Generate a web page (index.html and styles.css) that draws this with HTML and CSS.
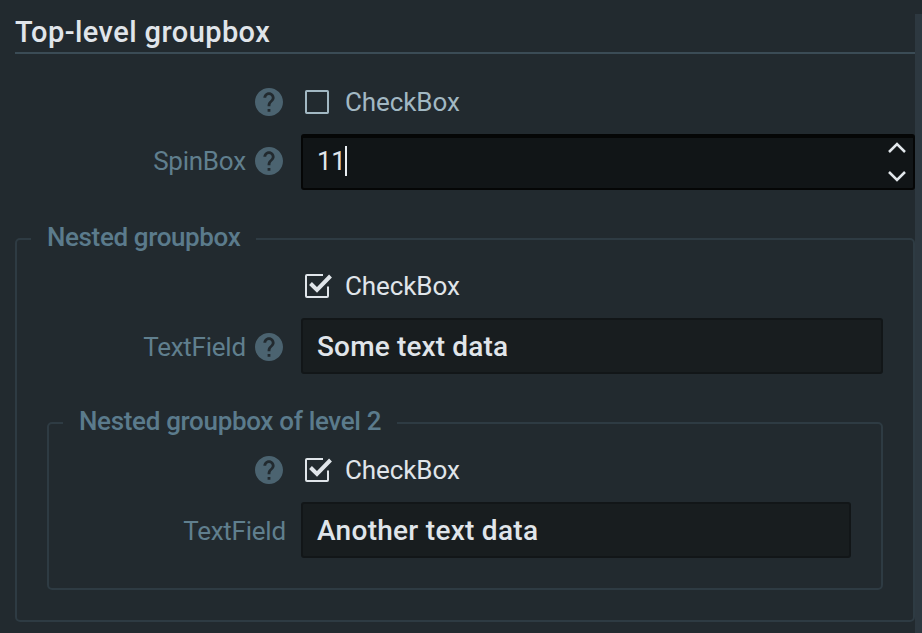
FILE: index.html
```html
<!DOCTYPE html>
<html lang="en">
<head>
<meta charset="utf-8">
<title>Group boxes</title>
<link rel="stylesheet" href="styles.css">
</head>
<body>
<svg class="defs" aria-hidden="true">
  <symbol id="help" viewBox="2 2 20 20"><path d="M12 2C6.48 2 2 6.48 2 12s4.480 10 10 10 10-4.480 10-10S17.520 2 12 2zm1 17h-2v-2h2v2zm2.070-7.750-.9.920C13.450 12.900 13 13.500 13 15h-2v-.5c0-1.100.45-2.100 1.170-2.830l1.240-1.260c.37-.36.59-.86.59-1.410 0-1.100-.9-2-2-2s-2 .9-2 2H8c0-2.210 1.790-4 4-4s4 1.790 4 4c0 .88-.36 1.680-.93 2.250z"/></symbol>
  <symbol id="checked" viewBox="0 0 28 24"><path d="M18 1H2a1 1 0 0 0-1 1v20a1 1 0 0 0 1 1h20a1 1 0 0 0 1-1V12.500" fill="none" stroke="currentColor" stroke-width="2"/><path d="M5.500 9.500l6.500 6.500L25.500 2" fill="none" stroke="currentColor" stroke-width="4"/></symbol>
  <symbol id="unchecked" viewBox="0 0 28 24"><rect x="1" y="1" width="22" height="22" rx=".7" fill="none" stroke="currentColor" stroke-width="2"/></symbol>
</svg>
<main class="panel">
  <h1 class="title"><span class="title-text">Top-level groupbox</span></h1>
  <div class="row row-check">
    <div class="label"><svg class="help"><use href="#help"/></svg></div>
    <div class="check check-off"><svg class="box"><use href="#unchecked"/></svg><span class="check-text">CheckBox</span></div>
  </div>
  <div class="row">
    <div class="label label-spin"><span class="label-text">SpinBox</span><svg class="help"><use href="#help"/></svg></div>
    <div class="field spin">
      <span class="spin-text">11</span><span class="caret"></span>
      <svg class="arrows" viewBox="0 0 20 42"><path d="M2 12l8-8 8 8M2 32l8 8 8-8"/></svg>
    </div>
  </div>
  <fieldset class="group">
    <legend class="legend"><span class="legend-text">Nested groupbox</span></legend>
    <div class="row row-check">
      <div class="label"></div>
      <div class="check"><svg class="box"><use href="#checked"/></svg><span class="check-text">CheckBox</span></div>
    </div>
    <div class="row">
      <div class="label label-field"><span class="label-text">TextField</span><svg class="help"><use href="#help"/></svg></div>
      <div class="field"><span class="field-text">Some text data</span></div>
    </div>
    <fieldset class="group group-inner">
      <legend class="legend"><span class="legend-text">Nested groupbox of level 2</span></legend>
      <div class="row row-check">
        <div class="label"><svg class="help"><use href="#help"/></svg></div>
        <div class="check"><svg class="box"><use href="#checked"/></svg><span class="check-text">CheckBox</span></div>
      </div>
      <div class="row">
        <div class="label label-field label-plain"><span class="label-text">TextField</span></div>
        <div class="field"><span class="field-text field-wide">Another text data</span></div>
      </div>
    </fieldset>
  </fieldset>
</main>
<div class="scroll"></div>
</body>
</html>
```
FILE: styles.css
```css
* { box-sizing: border-box; }
body {
  margin: 0;
  height: 633px;
  overflow: hidden;
  display: flex;
  background: #222a2f;
  color: #e0e5ea;
  font: 400 26px/30px Roboto, "Liberation Sans", sans-serif;
}
.defs { display: none; }
.panel { width: 900px; margin-left: 15px; --label: 268px; }
.scroll { width: 7px; margin-top: 14px; background: #2d3840; }
.title {
  margin: 0 0 24px;
  height: 54px;
  padding-top: 14px;
  border-bottom: 2px solid #3b4c56;
  font-size: 29px;
  line-height: 36px;
  font-weight: 500;
  letter-spacing: .42px;
}
.row { display: grid; grid-template-columns: var(--label) 1fr; column-gap: 18px; align-items: center; height: 56px; }
.row-check { height: 48px; margin-bottom: 8px; }
.label { display: flex; align-items: center; justify-content: flex-end; gap: 10px; color: #607f8e; }
.label-text { letter-spacing: -.25px; margin-right: -.8px; }
.label-spin { padding-bottom: 2px; }
.label-field { padding-top: 2px; }
.label-plain { margin-right: -2px; }
.help { width: 28px; height: 28px; fill: #4b6370; }
.check { display: flex; align-items: center; padding-left: 4px; }
.check-off { color: #a2b8c3; }
.check-text { letter-spacing: -.1px; }
.box { width: 28px; height: 24px; margin-right: 12px; }
.field {
  display: flex;
  align-items: center;
  height: 56px;
  padding: 2px 0 0 14px;
  background: #181d1f;
  border: 2px solid #121618;
  border-radius: 3px;
  font-weight: 500;
  font-size: 28px;
}
.field-text { letter-spacing: .15px; }
.field-wide { letter-spacing: .28px; }
.spin { background: #111517; border-color: #050606; border-top-width: 4px; font-weight: 400; font-size: 26px; padding: 0 0 4px 14px; }
.spin-text { letter-spacing: -.4px; }
.caret { width: 2px; height: 30px; background: #e8edf1; }
.arrows { width: 20px; height: 42px; margin: 0 6px 0 auto; fill: none; stroke: #e2e7eb; stroke-width: 2.5; }
.group { min-width: 0; margin: 34px 0 0; padding: 0 30px 30px; border: 2px solid #2e3b43; border-radius: 5px; --label: 236px; }
.group-inner { --label: 204px; }
.legend { height: 30px; line-height: 26px; margin: 0 0 8px -16px; padding: 0 16px; color: #5b7b8c; font-weight: 500; letter-spacing: -.38px; }
.group-inner .legend { letter-spacing: -.33px; }
```
